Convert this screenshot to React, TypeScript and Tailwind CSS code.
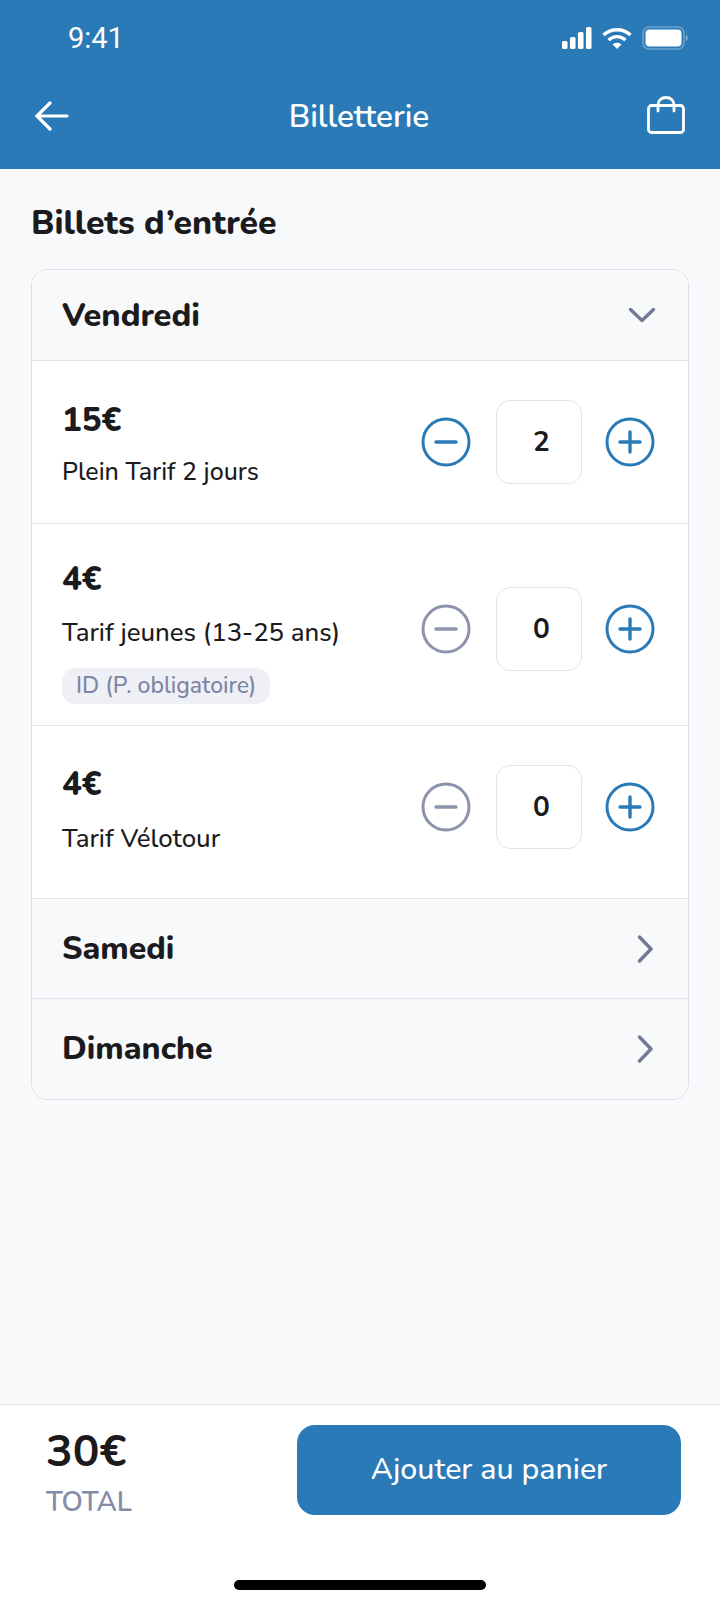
import React from "react";

function Round({ plus, active }: { plus?: boolean; active?: boolean }) {
  const c = active ? "#2a7ab8" : "#8c93ad";
  return (
    <svg width="50" height="50" viewBox="0 0 50 50" fill="none" stroke={c} strokeWidth="3" strokeLinecap="round">
      <circle cx="25" cy="25" r="23" />
      <path d="M15 25H35" strokeWidth="3.4" />
      {plus && <path d="M25 15V35" strokeWidth="3.4" />}
    </svg>
  );
}

function Stepper({ n, minusActive }: { n: number; minusActive?: boolean }) {
  return (
    <div className="flex items-center">
      <Round active={minusActive} />
      <div className="ml-[25px] mr-[23px] flex h-[84px] w-[86px] items-center justify-center rounded-[14px] border border-[#e1e4ec] bg-white pl-[5px] text-[28px] font-bold text-[#1b1b1d]">
        {n}
      </div>
      <Round plus active />
    </div>
  );
}

function Ticket({ price, label, labelSize, tag, h, n, minusActive, pt, gap, shift }: { price: string; label: string; labelSize: string; tag?: string; h: string; n: number; minusActive?: boolean; pt: string; gap: string; shift: string }) {
  return (
    <div className={`flex ${h} items-start justify-between border-b border-[#dfe3ea] bg-white pl-[30px] pr-[33px]`}>
      <div className={`flex flex-col ${pt}`}>
        <div className="text-[33px] font-extrabold leading-[40px] text-[#1b1b1d]">{price}</div>
        <div className={`${gap} ${labelSize} font-medium leading-[32px] text-[#1b1b1d]`}>{label}</div>
        {tag && (
          <div className="mt-[19px] w-fit rounded-[14px] bg-[#eef0f6] px-[14px] text-[23px] font-medium leading-[36px] text-[#7d85a3]">
            {tag}
          </div>
        )}
      </div>
      <div className={`self-center ${shift}`}>
        <Stepper n={n} minusActive={minusActive} />
      </div>
    </div>
  );
}

function DayRow({ label, open, last }: { label: string; open?: boolean; last?: boolean }) {
  return (
    <div className={`flex items-center justify-between bg-[#f8f9fb] pl-[30px] ${open ? "h-[91px] pr-[32px]" : "h-[100px] pr-[35px]"} ${last ? "" : "border-b border-[#dfe3ea]"}`}>
      <span className={`${open ? "text-[32.5px]" : "text-[32px]"} font-extrabold text-[#1b1b1d]`}>{label}</span>
      {open ? (
        <svg width="28" height="16" viewBox="0 0 28 16" fill="none" stroke="#737896" strokeWidth="3.4" strokeLinecap="round" strokeLinejoin="round">
          <path d="M2.5 2.5L14 13.5L25.5 2.5" />
        </svg>
      ) : (
        <svg width="16" height="28" viewBox="0 0 16 28" fill="none" stroke="#737896" strokeWidth="3.4" strokeLinecap="round" strokeLinejoin="round">
          <path d="M2.5 2L14 14L2.5 26" />
        </svg>
      )}
    </div>
  );
}

export default function App() {
  return (
    <div className="flex h-[1600px] w-[720px] flex-col overflow-hidden bg-[#f8f9fb] font-['Nunito','Open_Sans','Noto_Sans',sans-serif]">
      <header className="flex h-[169px] flex-col bg-[#2a7ab8] text-white">
        <div className="flex h-[76px] items-center justify-between pl-[68px] pr-[32px]">
          <span className="font-['Roboto',sans-serif] text-[29px] font-normal leading-none">9:41</span>
          <div className="flex items-center gap-[8px]">
            <svg width="32" height="22" viewBox="0 0 32 22" fill="white">
              <rect x="0" y="14" width="5.5" height="8" rx="1.5" />
              <rect x="8" y="10" width="5.5" height="12" rx="1.5" />
              <rect x="16" y="5" width="5.5" height="17" rx="1.5" />
              <rect x="24" y="0" width="5.5" height="22" rx="1.5" />
            </svg>
            <svg width="30" height="22" viewBox="0 0 30 22" fill="none" stroke="white" strokeWidth="3.4">
              <path d="M1.5 8C9 1 21 1 28.5 8" />
              <path d="M6.5 13C11.5 8.5 18.5 8.5 23.5 13" />
              <path d="M15 22L10.5 17.3C13 15.2 17 15.2 19.5 17.3Z" fill="white" stroke="none" />
            </svg>
            <svg width="46" height="24" viewBox="0 0 46 24" fill="none" className="ml-[2px]">
              <rect x="1" y="1" width="41" height="22" rx="6" stroke="#6ea4cf" strokeWidth="1.5" />
              <rect x="3.5" y="3.5" width="36" height="17" rx="4" fill="white" />
              <path d="M44 9V15C45.2 14.5 45.6 13.3 45.6 12C45.6 10.7 45.2 9.5 44 9Z" fill="#8db8da" />
            </svg>
          </div>
        </div>
        <div className="flex h-[78px] items-center justify-between pl-[34px] pr-[35px]">
          <svg width="34" height="30" viewBox="0 0 34 30" fill="none" stroke="white" strokeWidth="3.2" strokeLinecap="round" strokeLinejoin="round" className="ml-[1px] mt-[2px]">
            <path d="M32 15H2" />
            <path d="M15 2L2 15L15 28" />
          </svg>
          <span className="pl-[2px] pt-[4px] text-[31.5px] font-semibold leading-none">Billetterie</span>
          <svg width="38" height="38" viewBox="0 0 38 38" fill="none" stroke="white" strokeWidth="2.8" strokeLinecap="round" strokeLinejoin="round">
            <rect x="1.5" y="9.5" width="35" height="27" rx="3" />
            <path d="M11 15V9C11 4.5 14.5 1.5 19 1.5C23.5 1.5 27 4.5 27 9V15" />
          </svg>
        </div>
      </header>

      <main className="flex flex-1 flex-col px-[31px]">
        <h1 className="mt-[34px] text-[33.8px] font-extrabold leading-[40px] text-[#1b1b1d]">Billets d’entrée</h1>
        <div className="mt-[26px] overflow-hidden rounded-[16px] border border-[#dadee6]">
          <DayRow label="Vendredi" open />
          <Ticket price="15€" label="Plein Tarif 2 jours" labelSize="text-[25px]" h="h-[163px]" n={2} minusActive pt="pt-[40px]" gap="mt-[15px]" shift="" />
          <Ticket price="4€" label="Tarif jeunes (13-25 ans)" labelSize="text-[25.8px]" tag="ID (P. obligatoire)" h="h-[202px]" n={0} pt="pt-[36px]" gap="mt-[17px]" shift="mt-[8px]" />
          <Ticket price="4€" label="Tarif Vélotour" labelSize="text-[25.8px]" h="h-[173px]" n={0} pt="pt-[39px]" gap="mt-[18px]" shift="mb-[10px]" />
          <DayRow label="Samedi" />
          <DayRow label="Dimanche" last />
        </div>
      </main>

      <footer className="flex h-[196px] flex-col border-t border-[#dfe3ea] bg-white">
        <div className="flex items-start justify-between pl-[46px] pr-[39px] pt-[20px]">
          <div className="flex flex-col">
            <span className="text-[44.5px] font-bold leading-[54px] text-[#1b1b1d]">30€</span>
            <span className="mt-[3px] text-[27.5px] font-semibold leading-[40px] text-[#858ca8]">TOTAL</span>
          </div>
          <button className="h-[90px] w-[384px] rounded-[18px] bg-[#2a7ab8] text-[30.3px] font-medium text-white">
            Ajouter au panier
          </button>
        </div>
        <div className="mt-auto mb-[10px] h-[10px] w-[252px] self-center rounded-full bg-black" />
      </footer>
    </div>
  );
}
